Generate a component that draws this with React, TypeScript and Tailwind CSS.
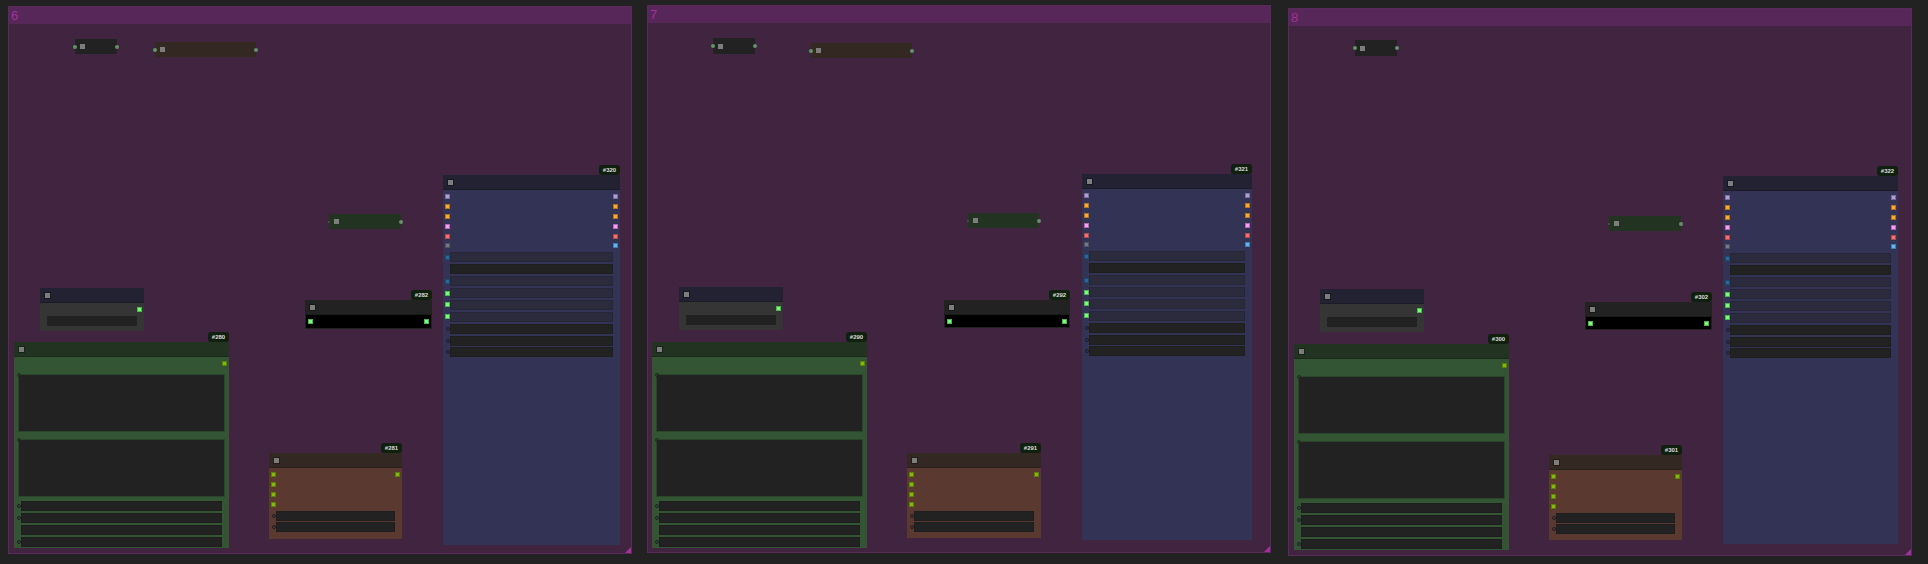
import type { ReactNode } from "react";
import { twMerge as tw } from "tailwind-merge";

type SlotKind = { color: string } | "ring" | "none";

const purple = { color: "bg-[#b39ddb]" };
const orange = { color: "bg-[#ffa931]" };
const pink = { color: "bg-[#ff9cf9]" };
const red = { color: "bg-[#ff6e6e]" };
const slate = { color: "bg-[#77778a]" };
const sky = { color: "bg-[#64b5f6]" };
const steel = { color: "bg-[#29699c]" };
const lime = { color: "bg-[#77ff77]" };
const olive = { color: "bg-[#86b80c]" };

function Slot({ kind }: { kind: SlotKind }) {
  if (kind === "none") return <span className="w-[5px] shrink-0" />;
  if (kind === "ring") {
    return (
      <span className="w-[5px] h-[5px] shrink-0 flex items-center justify-center">
        <span className="w-[4px] h-[4px] rounded-full border border-[#1d1d24]" />
      </span>
    );
  }
  return <span className={tw("w-[5px] h-[5px] shrink-0 border border-black/30", kind.color)} />;
}

function Header({ bg }: { bg: string }) {
  return (
    <div className={tw("h-[15px] shrink-0 flex items-center pl-[5px] border-b border-black/20", bg)}>
      <span className="w-[5px] h-[5px] bg-[#7d7d7d] shadow-[0_0_0_1px_rgba(0,0,0,0.3)]" />
    </div>
  );
}

function Badge({ label }: { label: string }) {
  return (
    <div className="absolute right-0 -top-[10px] w-[21px] h-[10px] rounded-[3px] bg-[#10200f] flex items-center justify-center text-[6px] leading-none font-bold text-[#dcdcdc] font-['Liberation_Sans',sans-serif]">
      {label}
    </div>
  );
}

function SlotRow({ left, right }: { left?: SlotKind; right?: SlotKind }) {
  return (
    <div className="h-[9.9px] shrink-0 flex items-center justify-between px-[2px]">
      <Slot kind={left ?? "none"} />
      <Slot kind={right ?? "none"} />
    </div>
  );
}

function WidgetRow({ slot = "none", bg = "bg-[#222222]" }: { slot?: SlotKind; bg?: string }) {
  return (
    <div className="h-[10px] shrink-0 flex items-center pl-[2px] pr-[7px]">
      <Slot kind={slot} />
      <div className={tw("flex-1 h-full border border-black/10", bg)} />
    </div>
  );
}

function TextArea() {
  return (
    <div className="relative h-[58px] shrink-0 mx-[4px] bg-[#222222] border border-[#2b452b]">
      <span className="absolute -left-[2px] -top-[2px] w-[4px] h-[4px] rounded-full border border-[#1f2a1f]" />
    </div>
  );
}

function Node({
  pos,
  head,
  body,
  badge,
  children,
}: {
  pos: string;
  head: string;
  body: string;
  badge?: string;
  children: ReactNode;
}) {
  return (
    <div className={tw("absolute flex flex-col", pos)}>
      {badge && <Badge label={badge} />}
      <Header bg={head} />
      <div className={tw("flex-1 flex flex-col pt-[2px]", body)}>{children}</div>
    </div>
  );
}

function Collapsed({ pos, bg, faintLeft }: { pos: string; bg: string; faintLeft?: boolean }) {
  return (
    <div className={tw("absolute flex items-center pl-[5px]", pos, bg)}>
      <span className="w-[5px] h-[5px] bg-[#7d7d7d]" />
      {faintLeft ? (
        <span className="absolute -left-[1px] w-[2px] h-[2px] rounded-full bg-[#3f5f3f]" />
      ) : (
        <span className="absolute -left-[2px] w-[4px] h-[4px] rounded-full bg-[#5f965f]" />
      )}
      <span className="absolute -right-[2px] w-[4px] h-[4px] rounded-full bg-[#64906a]" />
    </div>
  );
}

function Group({ pos, title }: { pos: string; title: string }) {
  return (
    <div className={tw("absolute w-[624px] h-[548px] bg-[#412540] border border-[#5a2a5c]", pos)}>
      <div className="h-[17px] bg-[#58275a] pl-[2px] flex items-center text-[13px] leading-none text-[#a1309b] font-['Liberation_Sans',sans-serif]">
        {title}
      </div>
      <svg className="absolute right-0 bottom-0" width="6" height="6" viewBox="0 0 6 6">
        <polygon points="6,0 6,6 0,6" fill="#a1309b" />
      </svg>
    </div>
  );
}

function GrayNode({ pos }: { pos: string }) {
  return (
    <Node pos={tw("w-[104px] h-[43px]", pos)} head="bg-[#222233]" body="bg-[#353535]">
      <SlotRow right={lime} />
      <div className="h-[10px] mt-[1px] mx-[7px] bg-[#222222]" />
    </Node>
  );
}

function GreenNode({ pos, badge }: { pos: string; badge: string }) {
  return (
    <Node pos={tw("w-[215px] h-[206px]", pos)} head="bg-[#223322]" body="bg-[#335533]" badge={badge}>
      <SlotRow right={olive} />
      <div className="flex flex-col gap-[7px] mt-[5px]">
        <TextArea />
        <TextArea />
      </div>
      <div className="flex flex-col gap-[1.9px] mt-[4px]">
        <WidgetRow slot="ring" />
        <WidgetRow slot="ring" />
        <WidgetRow />
        <WidgetRow slot="ring" />
      </div>
    </Node>
  );
}

function BrownNode({ pos, badge }: { pos: string; badge: string }) {
  return (
    <Node pos={tw("w-[133px] h-[86px]", pos)} head="bg-[#332922]" body="bg-[#593930]" badge={badge}>
      <SlotRow left={olive} right={olive} />
      <SlotRow left={olive} />
      <SlotRow left={olive} />
      <SlotRow left={olive} />
      <div className="flex flex-col gap-[1.9px] mt-[1px]">
        <WidgetRow slot="ring" />
        <WidgetRow slot="ring" />
      </div>
    </Node>
  );
}

function BlackNode({ pos, badge }: { pos: string; badge: string }) {
  return (
    <Node pos={tw("w-[127px] h-[29px]", pos)} head="bg-[#222222]" body="bg-black border-x border-b border-[#222222]" badge={badge}>
      <SlotRow left={lime} right={lime} />
    </Node>
  );
}

function BlueNode({ pos, badge }: { pos: string; badge: string }) {
  const dim = "bg-[#2b2b3d]";
  return (
    <Node pos={pos} head="bg-[#222233]" body="bg-[#333355] pt-[1.5px]" badge={badge}>
      <SlotRow left={purple} right={purple} />
      <SlotRow left={orange} right={orange} />
      <SlotRow left={orange} right={orange} />
      <SlotRow left={pink} right={pink} />
      <SlotRow left={red} right={red} />
      <SlotRow left={slate} right={sky} />
      <div className="flex flex-col gap-[1.9px] mt-[1.5px]">
        <WidgetRow slot={steel} bg={dim} />
        <WidgetRow />
        <WidgetRow slot={steel} bg={dim} />
        <WidgetRow slot={lime} bg={dim} />
        <WidgetRow slot={lime} bg={dim} />
        <WidgetRow slot={lime} bg={dim} />
        <WidgetRow slot="ring" />
        <WidgetRow slot="ring" />
        <WidgetRow slot="ring" />
      </div>
    </Node>
  );
}

export default function App() {
  return (
    <div className="relative w-[1928px] h-[564px] overflow-hidden bg-[#222222]">
      {/* group 6 */}
      <Group pos="left-[8px] top-[6px]" title="6" />
      <Collapsed pos="left-[75px] top-[39px] w-[42px] h-[15px]" bg="bg-[#222222]" />
      <Collapsed pos="left-[155px] top-[42px] w-[101px] h-[15px]" bg="bg-[#332922]" />
      <Collapsed pos="left-[329px] top-[214px] w-[72px] h-[15px]" bg="bg-[#223322]" faintLeft />
      <GrayNode pos="left-[40px] top-[288px]" />
      <GreenNode pos="left-[14px] top-[342px]" badge="#280" />
      <BrownNode pos="left-[269px] top-[453px]" badge="#281" />
      <BlackNode pos="left-[305px] top-[300px]" badge="#282" />
      <BlueNode pos="left-[443px] top-[175px] w-[177px] h-[370px]" badge="#320" />

      {/* group 7 */}
      <Group pos="left-[647px] top-[5px]" title="7" />
      <Collapsed pos="left-[713px] top-[38px] w-[42px] h-[16px]" bg="bg-[#222222]" />
      <Collapsed pos="left-[811px] top-[43px] w-[101px] h-[15px]" bg="bg-[#332922]" />
      <Collapsed pos="left-[968px] top-[213px] w-[71px] h-[15px]" bg="bg-[#223322]" faintLeft />
      <GrayNode pos="left-[679px] top-[287px]" />
      <GreenNode pos="left-[652px] top-[342px]" badge="#290" />
      <BrownNode pos="left-[907px] top-[453px] w-[134px] h-[85px]" badge="#291" />
      <BlackNode pos="left-[944px] top-[300px] w-[126px] h-[28px]" badge="#292" />
      <BlueNode pos="left-[1082px] top-[174px] w-[170px] h-[366px]" badge="#321" />

      {/* group 8 */}
      <Group pos="left-[1288px] top-[8px]" title="8" />
      <Collapsed pos="left-[1355px] top-[40px] w-[42px] h-[16px]" bg="bg-[#222222]" />
      <Collapsed pos="left-[1609px] top-[216px] w-[72px] h-[15px]" bg="bg-[#223322]" faintLeft />
      <GrayNode pos="left-[1320px] top-[289px]" />
      <GreenNode pos="left-[1294px] top-[344px]" badge="#300" />
      <BrownNode pos="left-[1549px] top-[455px] h-[85px]" badge="#301" />
      <BlackNode pos="left-[1585px] top-[302px] h-[28px]" badge="#302" />
      <BlueNode pos="left-[1723px] top-[176px] w-[175px] h-[368px]" badge="#322" />
    </div>
  );
}
